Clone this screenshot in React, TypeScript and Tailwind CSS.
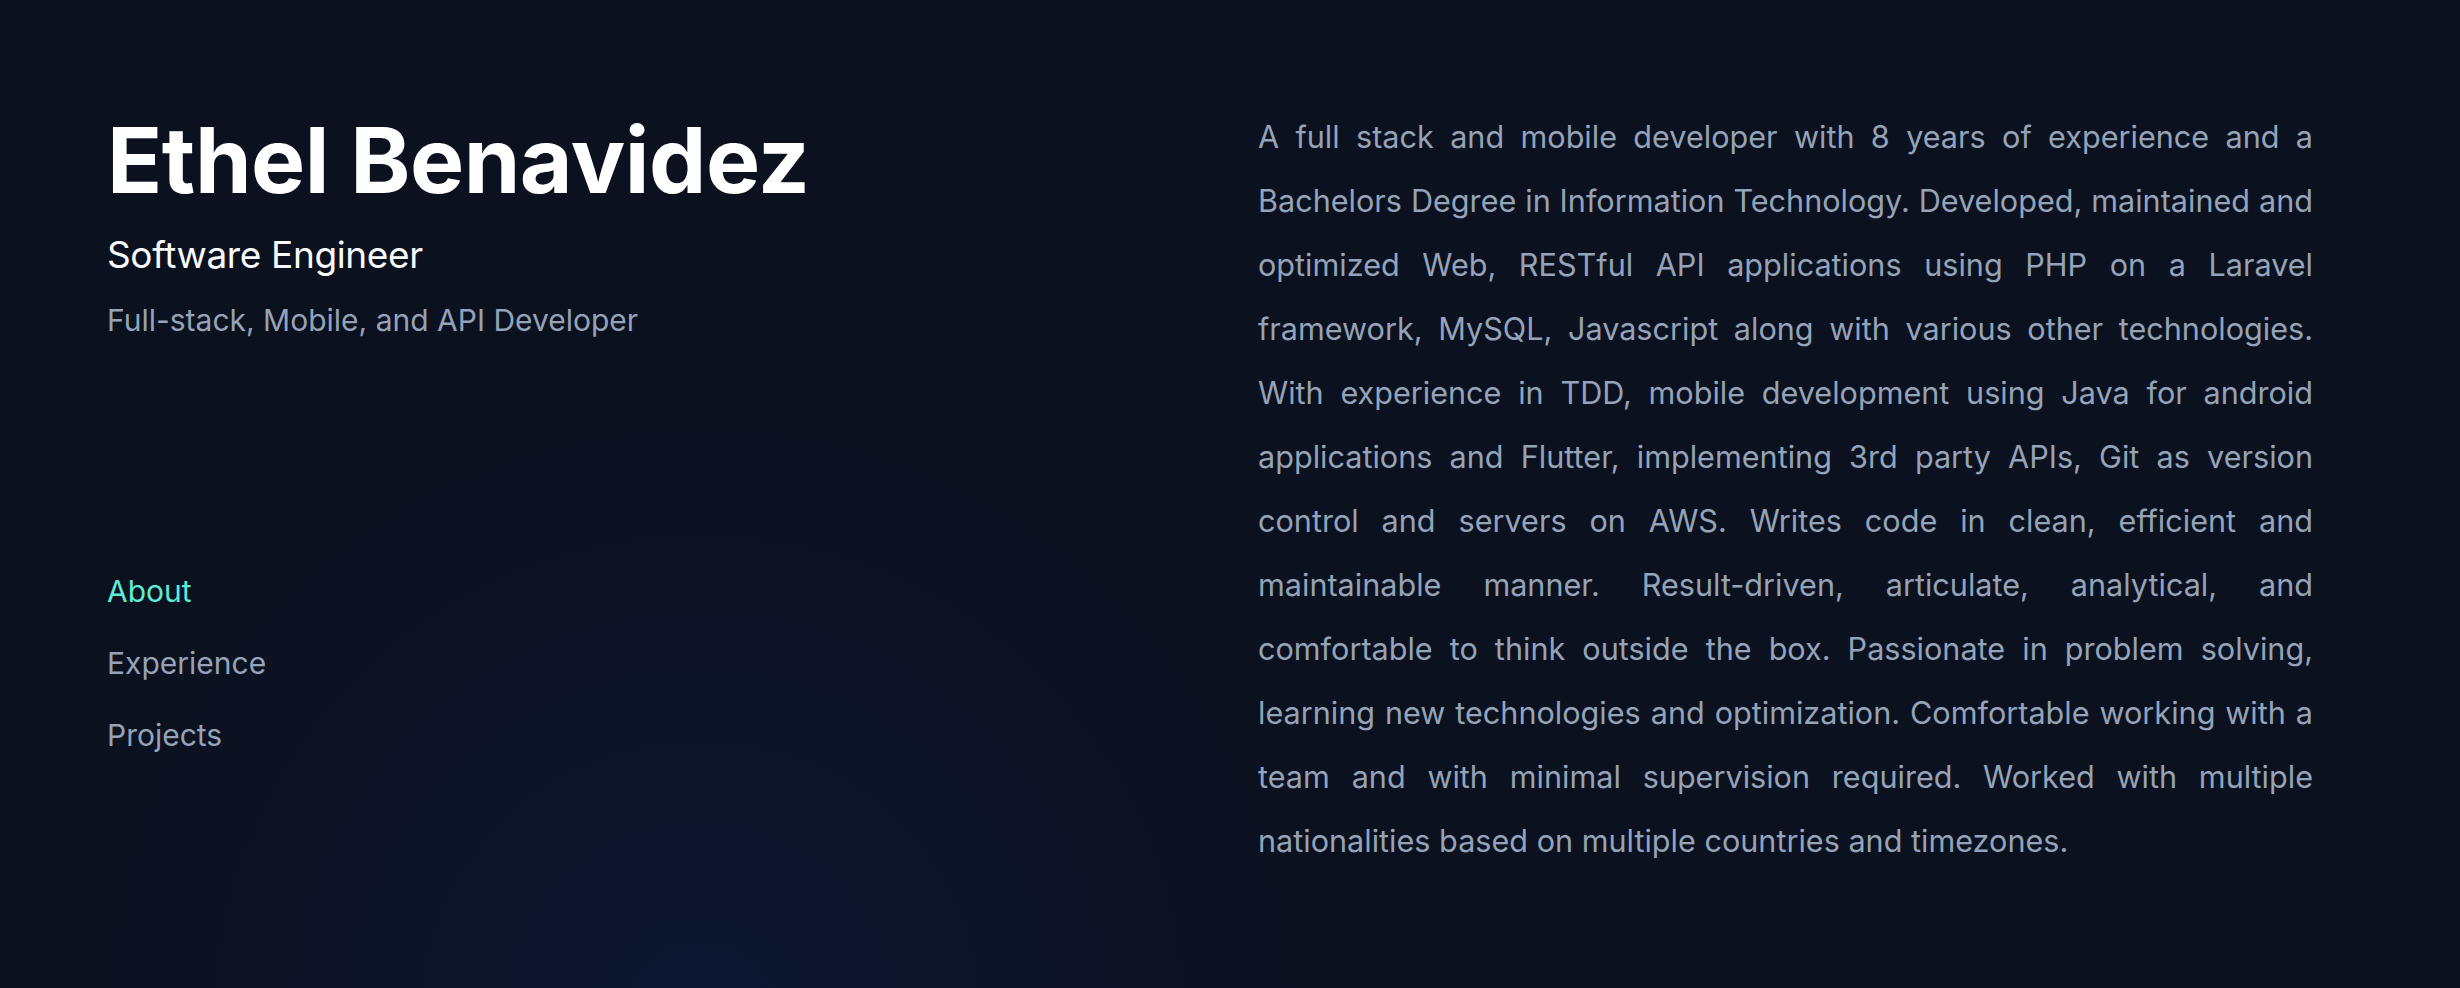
/**
 * Portfolio landing - name, tagline, nav and about text
 */

const NAV_ITEMS = [
  { label: 'About', active: true },
  { label: 'Experience', active: false },
  { label: 'Projects', active: false },
];

const ABOUT =
  'A full stack and mobile developer with 8 years of experience and a Bachelors Degree in Information Technology. Developed, maintained and optimized Web, RESTful API applications using PHP on a Laravel framework, MySQL, Javascript along with various other technologies. With experience in TDD, mobile development using Java for android applications and Flutter, implementing 3rd party APIs, Git as version control and servers on AWS. Writes code in clean, efficient and maintainable manner. Result-driven, articulate, analytical, and comfortable to think outside the box. Passionate in problem solving, learning new technologies and optimization. Comfortable working with a team and with minimal supervision required. Worked with multiple nationalities based on multiple countries and timezones.';

export default function App() {
  return (
    <div className="relative min-h-[988px] w-full overflow-hidden bg-[#0c111f] font-['Inter',sans-serif] antialiased">
      {/* Spotlight glow */}
      <div className="pointer-events-none absolute inset-0 bg-[radial-gradient(800px_at_700px_1020px,rgba(29,78,216,0.1),transparent_80%)]" />

      <div className="relative flex pl-[107px]">
        {/* Header */}
        <header className="w-[1151px] shrink-0 pt-[115px]">
          <h1 className="text-[91px] font-bold leading-none tracking-[-0.005em] text-white">
            Ethel Benavidez
          </h1>
          <h2 className="mt-[25px] text-[37px] leading-[48px] font-normal tracking-[-0.01em] text-[#f8fafc]">
            Software Engineer
          </h2>
          <p className="mt-[21px] text-[30px] leading-[40px] text-[#94a3b8]">
            Full-stack, Mobile, and API Developer
          </p>

          <nav className="mt-[231px]">
            <ul className="flex flex-col gap-[32px]">
              {NAV_ITEMS.map((item) => (
                <li key={item.label}>
                  <a
                    href="#"
                    className={`text-[30px] leading-[40px] ${
                      item.active ? 'text-[#5eead4]' : 'text-[#94a3b8]'
                    }`}
                  >
                    {item.label}
                  </a>
                </li>
              ))}
            </ul>
          </nav>
        </header>

        {/* About */}
        <main className="w-[1055px] shrink-0 pt-[105px]">
          <p className="text-justify text-[30.6px] leading-[64px] text-[#94a3b8]">{ABOUT}</p>
        </main>
      </div>
    </div>
  );
}
